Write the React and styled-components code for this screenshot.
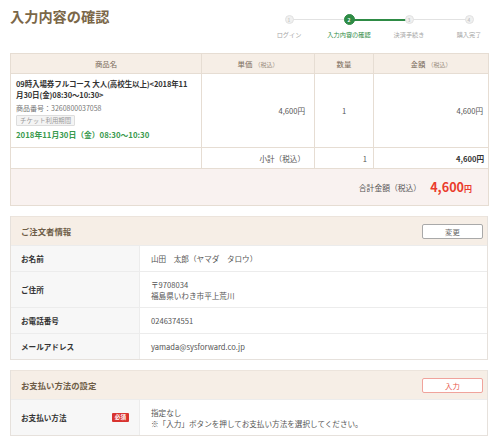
import React from 'react';
import styled, { createGlobalStyle } from 'styled-components';

const GlobalStyle = createGlobalStyle`
  html, body {
    margin: 0;
    padding: 0;
    background: #fff;
  }
  body {
    font-family: "Noto Sans CJK JP", "Noto Sans", sans-serif;
    color: #444;
  }
`;

const Page = styled.div`
  width: 478px;
  padding: 0 12px 0 10px;
`;

const TopBar = styled.div`
  display: flex;
  justify-content: space-between;
  align-items: flex-start;
  height: 53px;
`;

const Title = styled.h1`
  margin: 7px 0 0;
  font-size: 14.2px;
  line-height: 18px;
  font-weight: 700;
  color: #7b6748;
`;

const Steps = styled.ol`
  display: flex;
  margin: 14px -11px 0 0;
  padding: 0;
  list-style: none;
`;

const Step = styled.li`
  position: relative;
  width: 60px;
  display: flex;
  flex-direction: column;
  align-items: center;

  &:not(:first-child)::before {
    content: "";
    position: absolute;
    top: 5px;
    right: 30px;
    width: 60px;
    height: ${p => (p.$lineActive ? '1.5px' : '1px')};
    background: ${p => (p.$lineActive ? '#2e8b45' : '#e2e2e2')};
  }
`;

const Dot = styled.span`
  position: relative;
  z-index: 1;
  width: ${p => (p.$active ? '11px' : '9px')};
  height: ${p => (p.$active ? '11px' : '9px')};
  margin-top: ${p => (p.$active ? '0' : '1px')};
  margin-bottom: ${p => (p.$active ? '6px' : '7px')};
  border-radius: 50%;
  box-sizing: border-box;
  background: ${p => (p.$active ? '#2e8b45' : '#f0f0f0')};
  border: 1px solid ${p => (p.$active ? '#2e8b45' : '#e2e2e2')};
  color: ${p => (p.$active ? '#fff' : '#b5b5b5')};
  font-size: 5px;
  font-weight: ${p => (p.$active ? 700 : 400)};
  display: flex;
  align-items: center;
  justify-content: center;
  line-height: 1;
`;

const StepLabel = styled.span`
  font-size: 6.2px;
  line-height: 8px;
  white-space: nowrap;
  color: ${p => (p.$active ? '#2e8b45' : '#a5a5a5')};
`;

const CartTable = styled.table`
  width: 478px;
  border-collapse: collapse;
  table-layout: fixed;
  font-size: 7.6px;
  line-height: 11px;
  color: #555;
`;

const HeadCell = styled.th`
  height: 19px;
  padding: 0;
  background: #f6eee6;
  border: 1px solid #e6ddd3;
  font-weight: 400;
  color: #7a6b5a;
  font-size: 7.4px;
  text-align: center;
`;

const Tax = styled.span`
  font-size: 6px;
  color: #9a8d80;
  margin-left: 2px;
`;

const Cell = styled.td`
  box-sizing: border-box;
  border: 1px solid #e6ddd3;
  padding: ${p => p.$pad || '0 9px'};
  text-align: ${p => p.$align || 'left'};
  vertical-align: ${p => p.$valign || 'middle'};
  height: ${p => p.$h || 'auto'};
  font-weight: ${p => (p.$bold ? 700 : 400)};
  color: ${p => (p.$bold ? '#333' : '#555')};
`;

const ProductName = styled.div`
  font-weight: 700;
  color: #333;
  font-size: 7.5px;
  letter-spacing: -0.1px;
  line-height: 11px;
`;

const ProductCode = styled.div`
  margin-top: 3px;
  font-size: 7px;
  color: #777;
  line-height: 10px;
`;

const Tag = styled.div`
  display: inline-block;
  margin-top: 2px;
  padding: 0 3px;
  height: 11px;
  line-height: 9px;
  box-sizing: border-box;
  font-size: 6.4px;
  color: #999;
  background: #f4f4f4;
  border: 1px solid #ddd;
  border-radius: 1px;
  vertical-align: top;
`;

const TermDate = styled.div`
  margin-top: 3px;
  font-weight: 700;
  font-size: 7.8px;
  line-height: 11px;
  color: #3a9a4e;
`;

const TotalCell = styled.td`
  height: 36px;
  padding: 0 16px 0 0;
  background: #f9f2f0;
  border: 1px solid #e6ddd3;
  text-align: right;
  font-size: 7.8px;
  color: #555;
`;

const TotalPrice = styled.span`
  margin-left: 9px;
  font-size: 12.6px;
  font-weight: 700;
  color: #ea3b2c;
  vertical-align: -1px;
`;

const Yen = styled.span`
  font-size: 8px;
`;

const Panel = styled.section`
  margin-top: ${p => p.$gap || '10px'};
  border: 1px solid #e6e1dc;
  border-top: none;
`;

const PanelHead = styled.div`
  display: flex;
  align-items: center;
  justify-content: space-between;
  height: 29px;
  padding: 0 4px 0 10px;
  background: #f6eee6;
  border-top: 1px solid #ece4dc;
  box-sizing: border-box;
`;

const PanelTitle = styled.h2`
  margin: 0;
  font-size: 8.4px;
  font-weight: 700;
  color: #6e5d47;
`;

const ActionButton = styled.button`
  width: 61px;
  height: 15px;
  padding: 0;
  font-family: inherit;
  font-size: 7.4px;
  line-height: 13px;
  background: #fff;
  border: 1px solid ${p => (p.$accent ? '#f0a39c' : '#a9a9a9')};
  border-radius: 2px;
  color: ${p => (p.$accent ? '#e8554a' : '#666')};
`;

const InfoRow = styled.div`
  display: grid;
  grid-template-columns: 129px 1fr;
  height: ${p => p.$h || '26px'};
  box-sizing: border-box;
  border-top: 1px solid #ececec;
`;

const InfoLabel = styled.div`
  display: flex;
  align-items: center;
  justify-content: space-between;
  padding: 0 10px;
  background: #f7f7f7;
  border-right: 1px solid #ececec;
  font-size: 7.6px;
  font-weight: 700;
  color: #333;
`;

const InfoValue = styled.div`
  display: flex;
  flex-direction: column;
  justify-content: center;
  padding: 0 11px;
  font-size: 7.6px;
  line-height: 11px;
  color: #555;
`;

const Required = styled.span`
  display: inline-block;
  padding: 0 3px;
  height: 9px;
  line-height: 9px;
  font-size: 5.6px;
  font-weight: 700;
  color: #fff;
  background: #d8332f;
  border-radius: 1px;
`;

const steps = ['ログイン', '入力内容の確認', '決済手続き', '購入完了'];

const buyer = [
  { label: 'お名前', value: ['山田　太郎（ヤマダ　タロウ）'] },
  { label: 'ご住所', value: ['〒9708034', '福島県いわき市平上荒川'], h: '36px' },
  { label: 'お電話番号', value: ['0246374551'] },
  { label: 'メールアドレス', value: ['yamada@sysforward.co.jp'] },
];

export default function App() {
  const current = 1;
  return (
    <Page>
      <GlobalStyle />
      <TopBar>
        <Title>入力内容の確認</Title>
        <Steps>
          {steps.map((s, i) => (
            <Step key={s} $lineActive={i === current + 1}>
              <Dot $active={i === current}>{i + 1}</Dot>
              <StepLabel $active={i === current}>{s}</StepLabel>
            </Step>
          ))}
        </Steps>
      </TopBar>

      <CartTable>
        <colgroup>
          <col style={{ width: 191 }} />
          <col style={{ width: 113 }} />
          <col style={{ width: 59 }} />
          <col style={{ width: 115 }} />
        </colgroup>
        <thead>
          <tr>
            <HeadCell>商品名</HeadCell>
            <HeadCell>単価<Tax>（税込）</Tax></HeadCell>
            <HeadCell>数量</HeadCell>
            <HeadCell>金額<Tax>（税込）</Tax></HeadCell>
          </tr>
        </thead>
        <tbody>
          <tr>
            <Cell $pad="4px 9px 4px 5px" $valign="top" $h="74px">
              <ProductName>09時入場券フルコース 大人(高校生以上)&lt;2018年11月30日(金)08:30〜10:30&gt;</ProductName>
              <ProductCode>商品番号：3260800037058</ProductCode>
              <Tag>チケット利用期間</Tag>
              <TermDate>2018年11月30日（金）08:30〜10:30</TermDate>
            </Cell>
            <Cell $align="right">4,600円</Cell>
            <Cell $align="center">1</Cell>
            <Cell $align="right" $pad="0 5px">4,600円</Cell>
          </tr>
          <tr>
            <Cell $h="21px" />
            <Cell $align="right">小計（税込）</Cell>
            <Cell $align="right" $pad="0 6px">1</Cell>
            <Cell $align="right" $pad="0 4px" $bold>4,600円</Cell>
          </tr>
          <tr>
            <TotalCell colSpan={4}>
              合計金額（税込）
              <TotalPrice>4,600<Yen>円</Yen></TotalPrice>
            </TotalCell>
          </tr>
        </tbody>
      </CartTable>

      <Panel>
        <PanelHead>
          <PanelTitle>ご注文者情報</PanelTitle>
          <ActionButton>変更</ActionButton>
        </PanelHead>
        {buyer.map(row => (
          <InfoRow key={row.label} $h={row.h}>
            <InfoLabel>{row.label}</InfoLabel>
            <InfoValue>
              {row.value.map(v => (
                <span key={v}>{v}</span>
              ))}
            </InfoValue>
          </InfoRow>
        ))}
      </Panel>

      <Panel $gap="10px">
        <PanelHead>
          <PanelTitle>お支払い方法の設定</PanelTitle>
          <ActionButton $accent>入力</ActionButton>
        </PanelHead>
        <InfoRow $h="36px">
          <InfoLabel>
            お支払い方法
            <Required>必須</Required>
          </InfoLabel>
          <InfoValue>
            <span>指定なし</span>
            <span>※「入力」ボタンを押してお支払い方法を選択してください。</span>
          </InfoValue>
        </InfoRow>
      </Panel>
    </Page>
  );
}
